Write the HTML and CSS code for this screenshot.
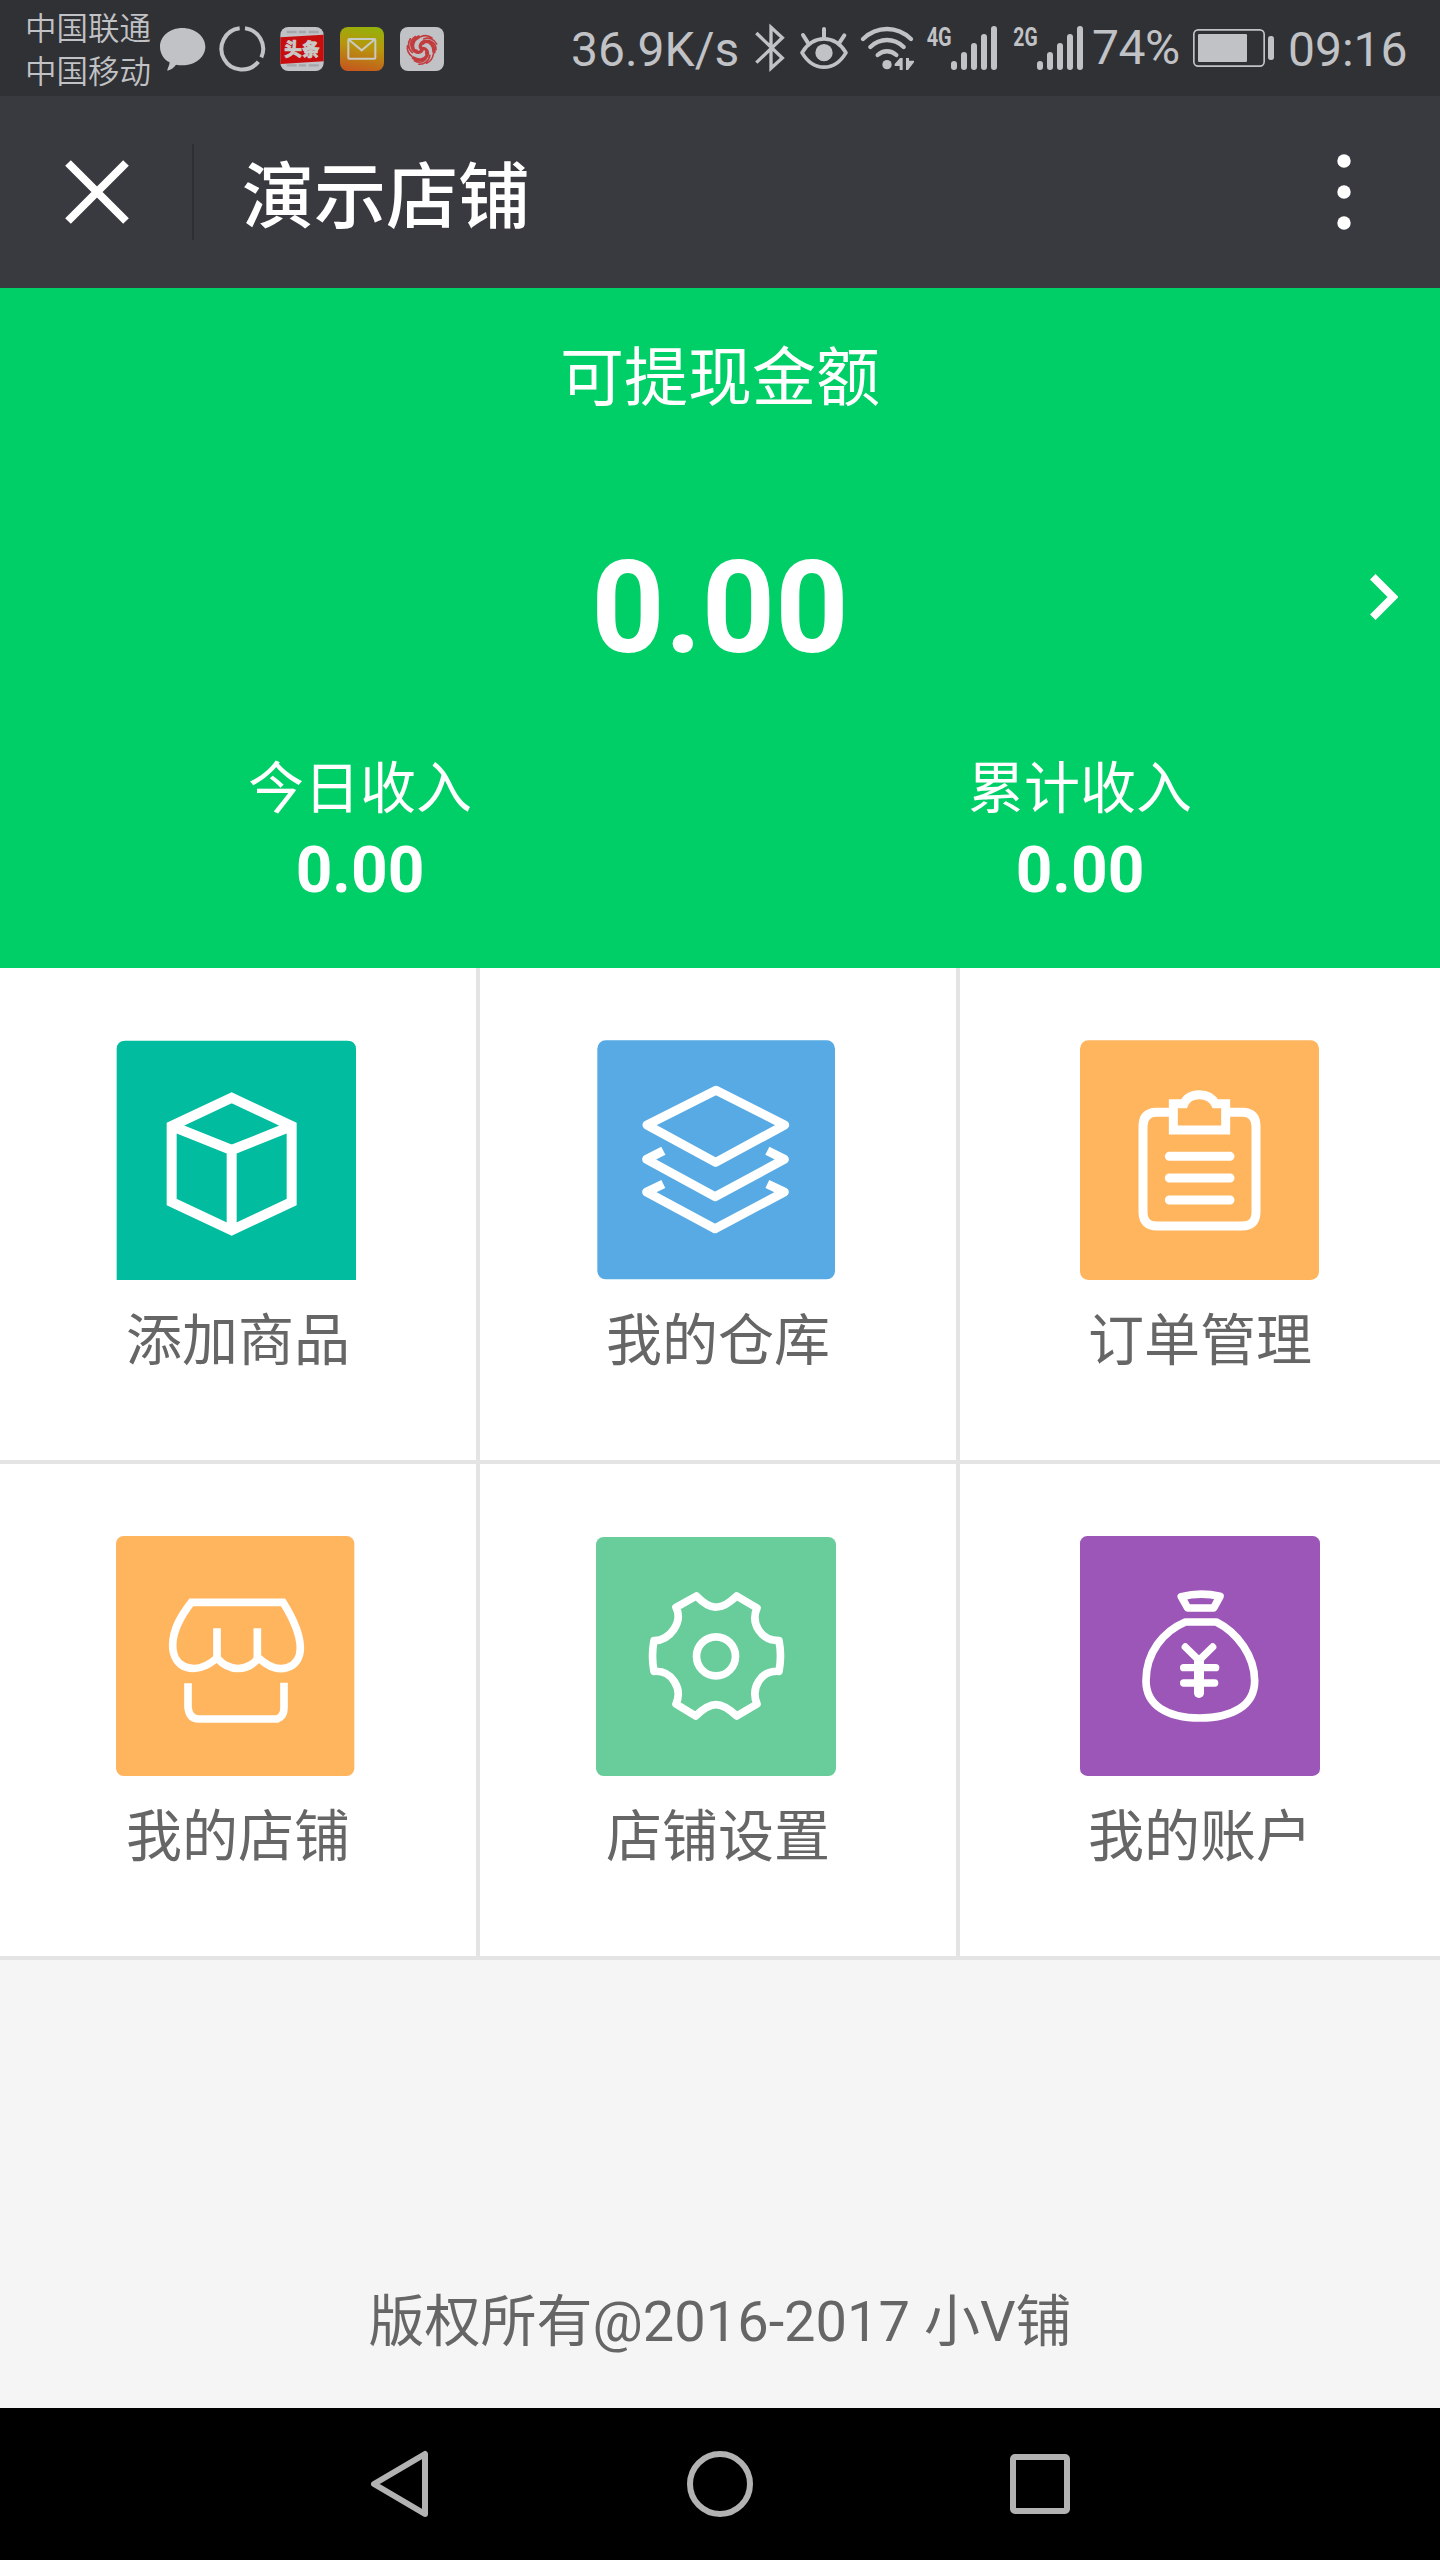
FILE: index.html
```html
<!DOCTYPE html>
<html lang="zh-CN">
<head>
<meta charset="utf-8">
<title>演示店铺</title>
<link rel="stylesheet" href="styles.css">
</head>
<body>
<div class="statusbar">
  <div class="carriers"><span>中国联通</span><span>中国移动</span></div>
  <svg class="st" width="58" height="96" viewBox="462 0 174 288"><path fill="#c1c2c5" d="M547 84c38 0 69 25 69 56s-31 56-69 56c-7 0-13-1-19-2-6 8-14 15-26 18-1-5 6-13 7-25-18-9-29-27-29-47 0-31 29-56 67-56z"/></svg>
  <svg class="st" width="60" height="96" viewBox="636 0 180 288"><g fill="none" stroke="#c1c2c5" stroke-width="12"><path d="M735 85A62 62 0 0 1 784 172"/><path d="M775 185A62 62 0 1 1 719 85"/></g></svg>
  <svg class="st" width="60" height="96" viewBox="816 0 180 288"><rect x="841" y="81" width="130" height="132" rx="24" fill="#c1c2c5"/><path d="M860 96h30M896 96h22M926 96h30M860 196h30M896 196h22M926 196h30" stroke="#a5a6aa" stroke-width="7"/><path fill="#c70d0d" d="M841 112l130-8v80l-130 8z"/><text x="853" y="168" class="toutiao" textLength="106" lengthAdjust="spacingAndGlyphs">头条</text></svg>
  <svg class="st" width="60" height="96" viewBox="996 0 180 288"><defs><linearGradient id="mail" x1=".6" y1="0" x2=".4" y2="1"><stop offset="0" stop-color="#96b00b"/><stop offset=".45" stop-color="#b8960d"/><stop offset="1" stop-color="#c45a1e"/></linearGradient></defs><rect x="1020" y="81" width="132" height="132" rx="24" fill="url(#mail)"/><g fill="none" stroke="#c9cac4" stroke-width="6"><rect x="1045" y="117" width="81" height="59" rx="3"/><path d="M1047 119l38 32 38-32"/></g></svg>
  <svg class="st" width="60" height="96" viewBox="1176 0 180 288"><rect x="1200" y="81" width="132" height="132" rx="24" fill="#c1c2c5"/><g fill="none" stroke="#c23c3e" stroke-linecap="round"><g id="arm" stroke-width="10"><path d="M1264 147c-7-8-1-22 13-23 15 0 26 14 25 32"/><path stroke-width="5" d="M1270 132c13-20 38-6 38 17M1271 117c16-7 33 2 39 15M1262 110c12-5 24-4 34 4"/></g><use href="#arm" transform="rotate(120 1266 147)"/><use href="#arm" transform="rotate(240 1266 147)"/></g></svg>
  <span class="speed">36.9K/s</span>
  <svg class="st" width="40" height="96" viewBox="600 0 120 288"><path fill="none" stroke="#c1c2c5" stroke-width="10" d="M619 99l78 75-34 31V82l34 31-78 75"/></svg>
  <svg class="st" width="65" height="96" viewBox="720 0 195 288"><path fill="none" stroke="#c1c2c5" stroke-width="11" stroke-linejoin="round" d="M756 158c34-55 98-55 132 0-34 58-98 58-132 0z"/><circle cx="822" cy="158" r="26" fill="#c1c2c5"/><path stroke="#c1c2c5" stroke-width="12" stroke-linecap="round" d="M822 87v24M759 105l14 22M883 106l-14 21"/></svg>
  <svg class="st" width="65" height="96" viewBox="915 0 195 288"><g fill="none" stroke="#c1c2c5" stroke-width="13" stroke-linecap="round"><path d="M939 117c42-40 102-40 144 0M961 141c29-28 71-28 100 0M983 165c17-15 39-15 56 0"/></g><circle cx="1011" cy="194" r="14" fill="#c1c2c5"/><path fill="#c1c2c5" d="M1058 174v36h-9v-12h-15v-6l16-18zM1068 174v36h6l18-23v-5h-15v-8z"/></svg>
  <svg class="st" width="88" height="96" viewBox="1110 0 264 288"><text x="1130" y="137" class="gen" textLength="75" lengthAdjust="spacingAndGlyphs">4G</text><path class="bars" d="M1212 192v9M1242 165v36M1272 138v63M1302 111v90M1332 87v114"/></svg>
  <svg class="st" width="84" height="96" viewBox="54 0 252 288"><text x="70" y="137" class="gen" textLength="73" lengthAdjust="spacingAndGlyphs">2G</text><path class="bars" d="M150 192v9M180 165v36M210 138v63M240 111v90M270 87v114"/></svg>
  <span class="percent">74%</span>
  <svg class="st" width="95" height="96" viewBox="585 0 285 288"><rect x="611.500" y="89.500" width="211" height="109" rx="13" fill="none" stroke="#c1c2c5" stroke-width="5"/><rect x="624" y="102" width="147" height="84" rx="4" fill="#c1c2c5"/><rect x="834" y="108" width="18" height="72" rx="8" fill="#c1c2c5"/></svg>
  <span class="clock">09:16</span>
</div>

<header class="navbar">
  <svg class="close" width="64" height="64" viewBox="0 0 64 64"><path d="M3 3l58 58M61 3L3 61" stroke="#fff" stroke-width="8"/></svg>
  <i class="divider"></i>
  <h1>演示店铺</h1>
  <svg class="more" width="14" height="76" viewBox="0 0 14 76" fill="#fff"><circle cx="7" cy="7" r="6.700"/><circle cx="7" cy="38" r="6.700"/><circle cx="7" cy="69" r="6.700"/></svg>
</header>

<section class="balance">
  <div class="balance-title">可提现金额</div>
  <div class="balance-total">0.00</div>
  <svg class="chevron" width="28" height="46" viewBox="0 0 28 46"><path d="M2.800 2.800L23 23 2.800 43.200" fill="none" stroke="#fff" stroke-width="7.800"/></svg>
  <div class="income">
    <div><span>今日收入</span><b>0.00</b></div>
    <div><span>累计收入</span><b>0.00</b></div>
  </div>
</section>

<main class="menu">
  <a class="cell">
    <svg width="240" height="240" viewBox="48 60 720 720"><path fill="#01bc9f" d="M50 780V88q0-26 26-26h666q26 0 26 26v692z"/><path fill="none" stroke="#fff" stroke-width="30" d="M395 233l180 85v228l-180 85-180-85V318zM215 318l180 72 180-72M395 390v240"/></svg>
    <span>添加商品</span>
  </a>
  <a class="cell">
    <svg width="240" height="240" viewBox="48 60 720 720"><rect x="52" y="61" width="713" height="717" rx="25" fill="#57aae4"/><path fill="none" stroke="#fff" stroke-width="27" stroke-linejoin="round" d="M408 211l206 104-207 112L201 315z"/><path fill="none" stroke="#fff" stroke-width="27" stroke-linejoin="round" d="M250 392l-50 26 205 112 208-112-51-26M250 492l-50 24 205 110 208-110-51-24"/></svg>
    <span>我的仓库</span>
  </a>
  <a class="cell">
    <svg width="240" height="240" viewBox="60 60 720 720"><rect x="60" y="61" width="717" height="719" rx="25" fill="#ffb55d"/><g fill="none" stroke="#fff" stroke-width="27"><path d="M328 277h-42q-37 3-37 42v257q0 42 42 42h255q42 0 42-42V319q0-39-37-42h-42"/><path d="M340 251h32q12-27 46-27t48 27h31v79H340z"/><path stroke-linecap="round" d="M328 409h182M328 474h182M328 540h182"/></g></svg>
    <span>订单管理</span>
  </a>
  <a class="cell">
    <svg width="240" height="240" viewBox="48 78 720 720"><rect x="48" y="78" width="715" height="720" rx="23" fill="#ffb55d"/><g fill="none" stroke="#fff" stroke-width="23"><path d="M274 277h275c30 48 52 97 52 138 0 58-63 87-125 29-36 42-88 42-125 0-62 55-133 34-133-38 0-48 25-89 56-129z"/><path d="M351 355v90M472 355v90M264 520v72q4 35 32 35h236q20-8 20-32v-77"/></g></svg>
    <span>我的店铺</span>
  </a>
  <a class="cell">
    <svg width="240" height="240" viewBox="48 78 720 720"><rect x="48" y="81" width="720" height="717" rx="23" fill="#68cd9b"/><g fill="none" stroke="#fff" stroke-width="23" stroke-linejoin="round"><path d="M288 292l61-34q36 36 60 33 24 2 61-33l61 36c-20 47 12 98 66 98q9 45 0 92c-54-4-86 49-66 98l-61 36q-36-34-62-34t-61 34l-59-36c21-47-13-102-66-98q-9-46 0-92c48 0 88-56 66-100z"/><circle cx="408" cy="439" r="58.500"/></g></svg>
    <span>店铺设置</span>
  </a>
  <a class="cell">
    <svg width="240" height="240" viewBox="60 78 720 720"><rect x="60" y="78" width="720" height="720" rx="22" fill="#9c56b7"/><g fill="none" stroke="#fff" stroke-width="23" stroke-linejoin="round"><path d="M364 260q58-15 116-1l-19 35h-78z"/><path d="M376 336h93c65 32 115 105 115 176 0 74-66 112-164 112s-162-38-162-112c0-84 52-148 118-176z"/></g><path fill="none" stroke="#fff" stroke-width="22" stroke-linecap="round" d="M376 411l41 40 41-40M371 473h96M371 519h93"/><path stroke="#fff" stroke-width="30" stroke-linecap="round" d="M417 455v94"/></svg>
    <span>我的账户</span>
  </a>
</main>

<footer class="copyright">版权所有@2016-2017 小V铺</footer>

<nav class="softkeys">
  <svg width="60" height="68" viewBox="0 0 60 68"><path d="M55 4v60L4 34z"/></svg>
  <svg width="66" height="66" viewBox="0 0 66 66"><circle cx="33" cy="33" r="30"/></svg>
  <svg width="60" height="60" viewBox="0 0 60 60"><rect x="3" y="3" width="54" height="54" rx="2"/></svg>
</nav>
</body>
</html>
```
FILE: styles.css
```css
* { box-sizing: border-box; }
body {
  margin: 0;
  width: 1440px;
  height: 2560px;
  display: flex;
  flex-direction: column;
  background: #f5f5f5;
  font-family: Roboto, "Noto Sans CJK SC", sans-serif;
  overflow: hidden;
}
svg { display: block; flex: none; }

.statusbar {
  height: 96px;
  flex: none;
  display: flex;
  align-items: center;
  background: #303135;
  color: #c1c2c5;
  font-size: 48px;
  white-space: nowrap;
}
.carriers {
  width: 154px;
  padding: 6px 0 0 25px;
  display: flex;
  flex-direction: column;
  font-size: 31.5px;
  font-weight: 350;
  line-height: 43px;
}
.speed { width: 298px; padding-left: 119px; padding-top: 2px; }
.percent { width: 93px; padding-bottom: 2px; letter-spacing: -0.5px; }
.clock { padding-left: 8px; padding-top: 2px; }
.toutiao { font: 900 54px "Noto Sans CJK SC", sans-serif; fill: #c9cac8; stroke: #c9cac8; stroke-width: 2; }
.gen { font: 700 80px Roboto, sans-serif; fill: #c1c2c5; }
.bars { stroke: #c1c2c5; stroke-width: 18; stroke-linecap: round; fill: none; }

.navbar {
  height: 192px;
  flex: none;
  display: flex;
  align-items: center;
  padding: 0 89px 0 65px;
  background: #393a3f;
  color: #fff;
}
.divider { width: 2px; height: 96px; margin-left: 63px; background: #2e2f33; }
.navbar h1 { margin: 0 0 0 48px; font-size: 72px; font-weight: 500; line-height: 96px; padding-top: 11px; }
.more { margin-left: auto; }

.balance {
  position: relative;
  height: 680px;
  flex: none;
  background: #00ce66;
  color: #fff;
  text-align: center;
  padding-top: 43px;
}
.balance-title { font-size: 64px; line-height: 96px; }
.balance-total { font-size: 128px; font-weight: 700; line-height: 150px; margin-top: 106px; }
.chevron { position: absolute; left: 1370px; top: 286px; }
.income { display: grid; grid-template-columns: 1fr 1fr; margin-top: 66px; }
.income div { display: flex; flex-direction: column; }
.income span { font-size: 56px; line-height: 80px; }
.income b { font-size: 64px; line-height: 80px; margin-top: 2px; }

.menu {
  flex: none;
  display: grid;
  grid-template-columns: repeat(3, 480px);
  grid-auto-rows: 496px;
  background: #fff;
}
.cell {
  display: flex;
  flex-direction: column;
  align-items: center;
  padding-top: 72px;
  border-right: 4px solid #e4e4e4;
  border-bottom: 4px solid #e4e4e4;
  color: #666;
  font-size: 56px;
  line-height: 84px;
}
.cell svg { margin-right: 4px; }
.cell span { margin-top: 19px; }
.cell:nth-child(3n) { border-right: 0; }
.cell:nth-child(3n) svg { margin-right: 0; }

.copyright {
  flex: 1;
  padding-bottom: 44px;
  display: flex;
  align-items: flex-end;
  justify-content: center;
  color: #666;
  font-size: 56px;
  line-height: 84px;
}
.softkeys {
  height: 152px;
  flex: none;
  display: flex;
  align-items: center;
  justify-content: space-between;
  padding: 0 370px;
  background: #000;
}
.softkeys svg { fill: none; stroke: #b2b2b2; stroke-width: 6; stroke-linejoin: round; }
```
